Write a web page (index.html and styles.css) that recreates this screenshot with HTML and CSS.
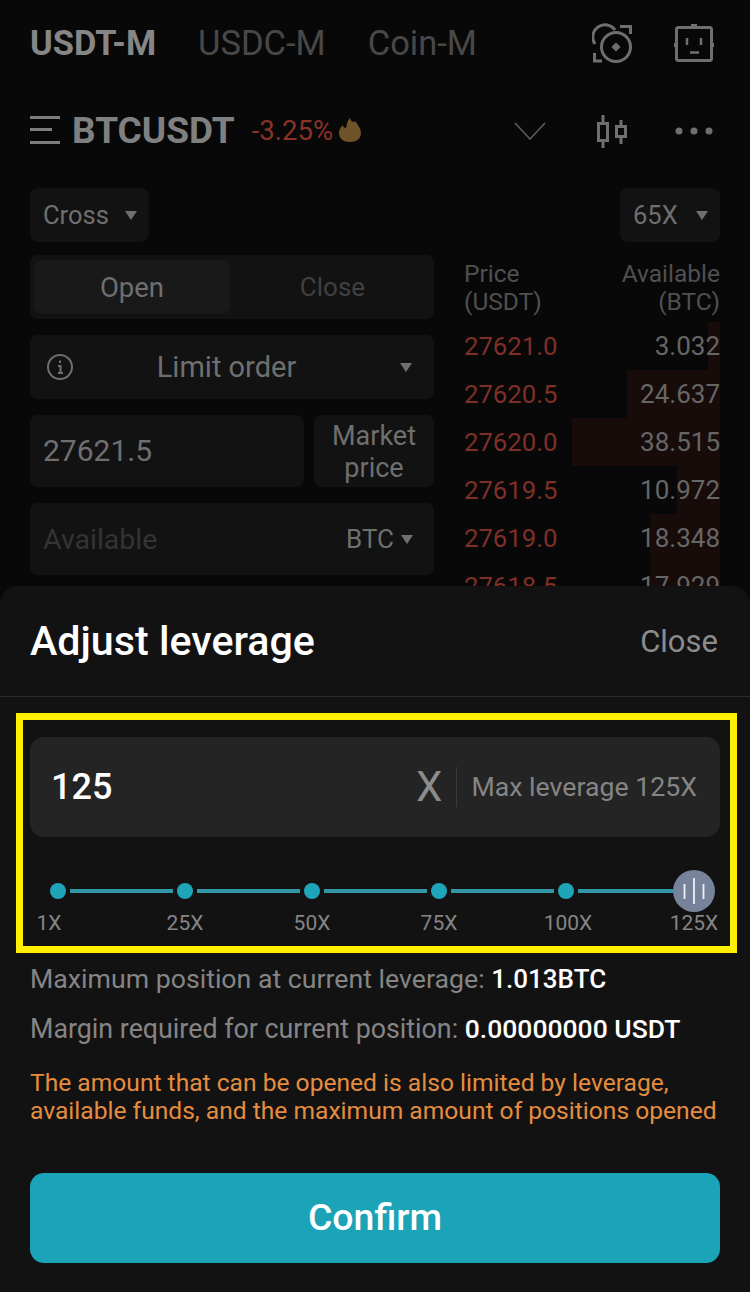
FILE: index.html
```html
<!DOCTYPE html>
<html lang="en">
<head>
    <meta charset="UTF-8">
    <meta name="viewport" content="width=device-width, initial-scale=1.0">
    <title>Adjust leverage</title>
    <link rel="stylesheet" href="styles.css">
</head>
<body>

    <div class="page">
        <div class="top-bar">
            <div class="tabs">
                <span class="tab active">USDT-M</span>
                <span class="tab">USDC-M</span>
                <span class="tab">Coin-M</span>
            </div>
            <div class="top-icons">
                <svg class="icon-scan" viewBox="0 0 40 42" fill="none" stroke="#6f6f6f" stroke-width="3">
                    <circle cx="24" cy="25" r="14.5"/>
                    <path d="M3 22 A11.5 11.5 0 1 1 23 8"/>
                    <path d="M28 4.500 H38.500 V12"/>
                    <path d="M2.500 31 V39 H10"/>
                    <path d="M24 21.500 L27.500 25 L24 28.500 L20.500 25 Z" fill="#6f6f6f" stroke-width="1.500"/>
                </svg>
                <svg class="icon-bot" viewBox="0 0 40 42" fill="none" stroke="#6f6f6f" stroke-width="3">
                    <rect x="2.500" y="5.500" width="35" height="33" rx="2"/>
                    <path d="M17 3.500 H23"/>
                    <path d="M1 21 V25 M39 21 V25"/>
                    <path d="M13 16 V23 M27 16 V23" stroke-width="2.500"/>
                    <path d="M16 30.500 H25" stroke-width="2.500"/>
                </svg>
            </div>
        </div>

        <div class="symbol-bar">
            <div class="symbol">
                <svg class="icon-menu" viewBox="0 0 30 28" fill="#7d7d7d">
                    <rect x="0" y="0" width="30" height="3"/>
                    <rect x="0" y="12" width="22" height="3"/>
                    <rect x="0" y="25" width="30" height="3"/>
                </svg>
                <span class="symbol-name">BTCUSDT</span>
                <span class="change">-3.25%</span>
                <svg class="icon-flame" viewBox="0 0 22 24" fill="#6e5228">
                    <path d="M11 0 C12 4 15 5 17 3 C17 6 22 9 22 15 C22 21 17 24 11 24 C5 24 0 21 0 15 C0 11 2 9 4 7 C4 9 5 10 7 10 C8 7 8 3 11 0 Z"/>
                </svg>
            </div>
            <div class="symbol-icons">
                <svg class="icon-chevron" viewBox="0 0 32 18" fill="none" stroke="#5f5f5f" stroke-width="1.500">
                    <path d="M1 1 L16 17 L31 1"/>
                </svg>
                <svg class="icon-candles" viewBox="0 0 32 34" fill="none" stroke="#6f6f6f" stroke-width="3">
                    <rect x="2.500" y="9.500" width="9" height="17"/>
                    <path d="M7 1 V9 M7 27 V34"/>
                    <rect x="20.500" y="12.500" width="9" height="10"/>
                    <path d="M25 6 V12 M25 23 V30"/>
                </svg>
                <svg class="icon-dots" viewBox="0 0 38 8" fill="#6f6f6f">
                    <circle cx="4" cy="4" r="3.500"/>
                    <circle cx="19" cy="4" r="3.500"/>
                    <circle cx="34" cy="4" r="3.500"/>
                </svg>
            </div>
        </div>

        <div class="mode-bar">
            <div class="pill pill-cross">Cross <i class="caret"></i></div>
            <div class="pill pill-lever">65X <i class="caret"></i></div>
        </div>

        <div class="trade">
            <div class="order-form">
                <div class="switch">
                    <span class="switch-item on">Open</span>
                    <span class="switch-item">Close</span>
                </div>
                <div class="field order-type">
                    <svg class="icon-info" viewBox="0 0 26 26" fill="none" stroke="#6f6f6f" stroke-width="2">
                        <circle cx="13" cy="13" r="12"/>
                        <path d="M13 6.500 V9 M11 12 H13.500 V19 M11 19 H16"/>
                    </svg>
                    <span class="order-label">Limit order</span>
                    <i class="caret"></i>
                </div>
                <div class="price-line">
                    <div class="field price-input">27621.5</div>
                    <div class="field market-btn">Market<br>price</div>
                </div>
                <div class="field amount">
                    <span class="placeholder">Available</span>
                    <span class="unit">BTC<i class="caret"></i></span>
                </div>
            </div>

            <div class="book">
                <div class="book-head">
                    <span>Price<br>(USDT)</span>
                    <span class="right">Available<br>(BTC)</span>
                </div>
                <div class="book-row"><b class="depth" style="width:12px"></b><span class="ask">27621.0</span><span class="qty">3.032</span></div>
                <div class="book-row"><b class="depth" style="width:93px"></b><span class="ask">27620.5</span><span class="qty">24.637</span></div>
                <div class="book-row"><b class="depth" style="width:148px"></b><span class="ask">27620.0</span><span class="qty">38.515</span></div>
                <div class="book-row"><b class="depth" style="width:43px"></b><span class="ask">27619.5</span><span class="qty">10.972</span></div>
                <div class="book-row"><b class="depth" style="width:70px"></b><span class="ask">27619.0</span><span class="qty">18.348</span></div>
                <div class="book-row"><b class="depth" style="width:70px"></b><span class="ask">27618.5</span><span class="qty">17.929</span></div>
            </div>
        </div>

        <div class="sheet">
            <div class="sheet-head">
                <h2>Adjust leverage</h2>
                <span class="sheet-close">Close</span>
            </div>

            <div class="highlight">
                <div class="lever-input">
                    <span class="lever-value">125</span>
                    <span class="lever-x">X</span>
                    <span class="lever-max">Max leverage 125X</span>
                </div>
                <div class="slider">
                    <i class="dot"></i><i class="seg"></i>
                    <i class="dot"></i><i class="seg"></i>
                    <i class="dot"></i><i class="seg"></i>
                    <i class="dot"></i><i class="seg"></i>
                    <i class="dot"></i><i class="seg seg-last"></i>
                    <span class="thumb">
                        <svg viewBox="0 0 42 42" fill="none" stroke="#eef0f4" stroke-width="1.800">
                            <path d="M11.500 14 V29 M21 8 V34 M30.500 14 V29"/>
                        </svg>
                    </span>
                </div>
                <div class="ticks">
                    <span>1X</span><span>25X</span><span>50X</span><span>75X</span><span>100X</span><span>125X</span>
                </div>
            </div>

            <p class="info info-first">Maximum position at current leverage: <strong>1.013BTC</strong></p>
            <p class="info">Margin required for current position: <strong>0.00000000 USDT</strong></p>
            <p class="warning">The amount that can be opened is also limited by leverage, available funds, and the maximum amount of positions opened</p>

            <button class="confirm">Confirm</button>
        </div>
    </div>

</body>
</html>
```

FILE: styles.css
```css
* {
    margin: 0;
    padding: 0;
    box-sizing: border-box;
}

body {
    font-family: 'Roboto', 'Noto Sans', sans-serif;
    background: #080808;
    color: #6f6f6f;
}

.page {
    position: relative;
    width: 750px;
    height: 1292px;
    overflow: hidden;
    padding: 0 30px;
}

svg {
    display: block;
    flex: none;
}

/* top bar */
.top-bar {
    display: flex;
    justify-content: space-between;
    align-items: center;
    height: 86px;
}

.tabs {
    display: flex;
    gap: 42px;
}

.tab {
    font-size: 34.5px;
    color: #484848;
}

.tab.active {
    color: #868686;
    font-weight: 700;
}

.top-icons {
    display: flex;
    gap: 42px;
    padding: 0 6px 0 0;
}

.icon-scan, .icon-bot {
    width: 40px;
    height: 42px;
}

/* symbol */
.symbol-bar {
    display: flex;
    justify-content: space-between;
    align-items: center;
    height: 88px;
}

.symbol {
    display: flex;
    align-items: center;
}

.icon-menu {
    width: 30px;
    height: 28px;
    margin-right: 12px;
}

.symbol-name {
    font-size: 37px;
    font-weight: 700;
    color: #808080;
    margin-right: 17px;
}

.change {
    font-size: 27.5px;
    color: #8a3228;
    margin-right: 6px;
}

.icon-flame {
    width: 22px;
    height: 24px;
}

.symbol-icons {
    display: flex;
    align-items: center;
    padding: 2px 7px 0 0;
}

.icon-chevron {
    width: 32px;
    height: 18px;
    margin-right: 50px;
}

.icon-candles {
    width: 32px;
    height: 34px;
    margin-right: 47px;
}

.icon-dots {
    width: 38px;
    height: 8px;
}

/* cross / leverage */
.mode-bar {
    display: flex;
    justify-content: space-between;
    margin-top: 14px;
}

.pill {
    display: flex;
    align-items: center;
    justify-content: space-between;
    height: 54px;
    padding: 0 12px 0 13px;
    background: #121212;
    border-radius: 8px;
    font-size: 25.5px;
    color: #6f6f6f;
}

.pill-cross {
    width: 119px;
}

.pill-lever {
    width: 100px;
}

.caret {
    display: inline-block;
    width: 0;
    height: 0;
    border-left: 6px solid transparent;
    border-right: 6px solid transparent;
    border-top: 9px solid #6f6f6f;
}

/* order form + book */
.trade {
    display: flex;
    justify-content: space-between;
    margin-top: 13px;
}

.order-form {
    display: flex;
    flex-direction: column;
    gap: 16px;
    width: 404px;
}

.switch {
    display: flex;
    height: 64px;
    padding: 5px 4px;
    background: #121212;
    border-radius: 8px;
}

.switch-item {
    flex: 1;
    display: flex;
    align-items: center;
    justify-content: center;
    padding-left: 5px;
    font-size: 26px;
    color: #404040;
    border-radius: 8px;
}

.switch-item.on {
    flex: none;
    width: 196px;
    padding-left: 0;
    font-size: 27.5px;
    background: #191919;
    color: #6f6f6f;
}

.field {
    background: #121212;
    border-radius: 8px;
    font-size: 27px;
}

.order-type {
    display: flex;
    align-items: center;
    height: 64px;
    padding: 0 22px 0 17px;
    font-size: 29px;
}

.icon-info {
    width: 26px;
    height: 26px;
}

.order-label {
    flex: 1;
    text-align: center;
    padding-left: 10px;
    padding-right: 30px;
    color: #6f6f6f;
}

.price-line {
    display: flex;
    gap: 10px;
}

.price-input {
    display: flex;
    align-items: center;
    width: 274px;
    height: 72px;
    padding: 0 0 2px 13px;
    font-size: 30px;
}

.market-btn {
    width: 120px;
    height: 72px;
    text-align: center;
    font-size: 27px;
    line-height: 32px;
    padding-top: 5px;
}

.amount {
    display: flex;
    align-items: center;
    justify-content: space-between;
    height: 72px;
    padding: 0 21px 0 13px;
}

.placeholder {
    color: #343434;
    font-size: 28.500px;
}

.unit {
    display: flex;
    align-items: center;
    gap: 7px;
    font-size: 26px;
}

.book {
    width: 257px;
    margin-top: 3px;
    margin-right: -1px;
    font-size: 24px;
}

.book-head {
    display: flex;
    justify-content: space-between;
    height: 64px;
    font-size: 24.500px;
    line-height: 28px;
    padding-top: 2px;
    color: #505050;
}

.right {
    text-align: right;
    padding-right: 1px;
}

.book-row {
    position: relative;
    display: flex;
    justify-content: space-between;
    align-items: center;
    height: 48px;
    font-size: 26px;
    padding-right: 1px;
}

.depth {
    position: absolute;
    top: 0;
    right: 1px;
    bottom: 0;
    background: #170c0a;
}

.ask, .qty {
    position: relative;
}

.ask {
    font-size: 25.700px;
    color: #7e2f27;
}

.qty {
    color: #666;
}

/* bottom sheet */
.sheet {
    position: absolute;
    left: 0;
    right: 0;
    bottom: 0;
    height: 706px;
    background: #121212;
    border-radius: 18px 18px 0 0;
    display: flex;
    flex-direction: column;
}

.sheet-head {
    display: flex;
    justify-content: space-between;
    align-items: center;
    height: 111px;
    padding: 0 32px 0 30px;
    border-bottom: 1px solid #2b2b2b;
}

.sheet-head h2 {
    font-size: 41.200px;
    font-weight: 500;
    color: #fff;
}

.sheet-close {
    font-size: 31px;
    color: #8c8c8c;
}

.highlight {
    margin: 16px 13px 0 16px;
    height: 240px;
    border: 7px solid #fff000;
    padding: 17px 10px 0 7px;
}

.lever-input {
    display: flex;
    align-items: center;
    height: 100px;
    padding: 0 23px 0 21px;
    background: #242424;
    border-radius: 14px;
}

.lever-value {
    flex: 1;
    font-size: 36px;
    font-weight: 500;
    color: #fff;
}

.lever-x {
    font-size: 42px;
    color: #8c8c8c;
    padding-right: 14px;
    border-right: 1px solid #3a3a3a;
    line-height: 40px;
}

.lever-max {
    font-size: 26.700px;
    color: #858585;
    padding-left: 14px;
}

.slider {
    display: flex;
    align-items: center;
    height: 42px;
    margin: 33px 0 0 20px;
}

.dot {
    flex: none;
    width: 16px;
    height: 16px;
    border-radius: 50%;
    background: #1fa5ba;
}

.seg {
    flex: none;
    width: 103px;
    height: 4px;
    margin: 0 4px;
    background: #3196a6;
}

.seg-last {
    width: 95px;
    margin-right: 0;
}

.thumb {
    flex: none;
    width: 42px;
    height: 42px;
    border-radius: 50%;
    background: #77839b;
}

.ticks {
    display: grid;
    grid-template-columns: 136px 127px 127px 129px 126px 60px;
    margin: 0 0 0 -11px;
    font-size: 21px;
    line-height: 23px;
    color: #858585;
}

.ticks span {
    width: 60px;
    text-align: center;
}

.info {
    font-size: 26.800px;
    line-height: 32px;
    padding: 0 30px;
    margin-top: 18px;
    color: #858585;
}

.info-first {
    margin-top: 10px;
    font-size: 26.700px;
}

.info strong {
    font-size: 26.500px;
    font-weight: 500;
    color: #fff;
}

.info-first strong {
    font-size: 26px;
}

.warning {
    font-size: 24.600px;
    line-height: 28px;
    padding: 0 30px;
    margin-top: 24px;
    color: #e58d3f;
}

.confirm {
    display: block;
    width: 690px;
    height: 90px;
    margin: 48px 30px 0;
    padding-bottom: 2px;
    border: none;
    border-radius: 14px;
    background: #1ba3b8;
    color: #fff;
    font-family: inherit;
    font-size: 37.400px;
    font-weight: 500;
}
```
